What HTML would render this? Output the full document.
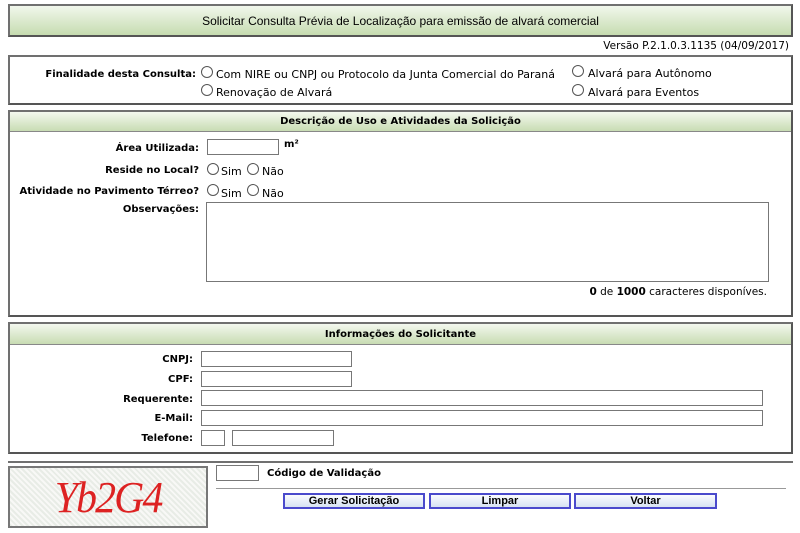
<!DOCTYPE html>
<html><head><meta charset="utf-8"><style>
*{margin:0;padding:0;box-sizing:border-box}
body{width:800px;height:533px;background:#fff;position:relative;overflow:hidden;font-family:"DejaVu Sans","Liberation Sans",sans-serif;font-size:11px;color:#000}
.a{position:absolute;white-space:nowrap}
.box{position:absolute;border:2px solid #707070;border-right-color:#555;border-bottom-color:#555}
.hdr{position:absolute;left:0;right:0;top:0;background:linear-gradient(#f3f8ee,#c8dcb3);border-bottom:1px solid #888;text-align:center;font-weight:bold;font-size:10px}
.b{font-weight:bold;font-size:10px}
.r{text-align:right}
.rad{position:absolute;width:12px;height:12px;border:1px solid #555;border-radius:50%;background:#fff}
.in{position:absolute;border:1px solid #777;background:#fff;height:16px}
.btn{position:absolute;top:493px;height:16px;border:2px solid #4a4acc;background:linear-gradient(#fafcff,#d6e2f2);font-family:"Liberation Sans",sans-serif;font-weight:bold;font-size:11px;text-align:center;line-height:12px}
</style></head><body>
<div class="box" style="left:8px;top:4px;width:785px;height:33px;background:linear-gradient(#f1f7ec,#c6dcb0)"><div class="a" style="left:0;right:0;top:8px;text-align:center;font-family:'Liberation Sans',sans-serif;font-size:12px">Solicitar Consulta Prévia de Localização para emissão de alvará comercial</div></div>
<div class="a" style="right:11px;top:40px;font-size:10.5px">Versão P.2.1.0.3.1135 (04/09/2017)</div>

<div class="box" style="left:8px;top:55px;width:785px;height:50px"></div>
<div class="a b r" style="right:604px;top:69px">Finalidade desta Consulta:</div>
<div class="rad" style="left:201px;top:66px"></div><div class="a" style="left:216px;top:68px">Com NIRE ou CNPJ ou Protocolo da Junta Comercial do Paraná</div>
<div class="rad" style="left:201px;top:84px"></div><div class="a" style="left:216px;top:86px">Renovação de Alvará</div>
<div class="rad" style="left:572px;top:65px"></div><div class="a" style="left:588px;top:67px">Alvará para Autônomo</div>
<div class="rad" style="left:572px;top:84px"></div><div class="a" style="left:588px;top:86px">Alvará para Eventos</div>

<div class="box" style="left:8px;top:110px;width:785px;height:207px"><div class="hdr" style="height:20px;line-height:20px">Descrição de Uso e Atividades da Solicição</div></div>
<div class="a b r" style="right:601px;top:143px">Área Utilizada:</div>
<div class="in" style="left:207px;top:139px;width:72px"></div><div class="a b" style="left:284px;top:139px">m²</div>
<div class="a b r" style="right:601px;top:165px">Reside no Local?</div>
<div class="rad" style="left:207px;top:163px"></div><div class="a" style="left:221px;top:165px">Sim</div>
<div class="rad" style="left:247px;top:163px"></div><div class="a" style="left:262px;top:165px">Não</div>
<div class="a b r" style="right:601px;top:186px">Atividade no Pavimento Térreo?</div>
<div class="rad" style="left:207px;top:184px"></div><div class="a" style="left:221px;top:187px">Sim</div>
<div class="rad" style="left:247px;top:184px"></div><div class="a" style="left:262px;top:187px">Não</div>
<div class="a b r" style="right:601px;top:204px">Observações:</div>
<div class="in" style="left:206px;top:202px;width:563px;height:80px"></div>
<div class="a" style="right:33px;top:286px;font-size:10.5px"><b>0</b> de <b>1000</b> caracteres disponíves.</div>

<div class="box" style="left:8px;top:322px;width:785px;height:132px"><div class="hdr" style="height:21px;line-height:22px">Informações do Solicitante</div></div>
<div class="a b r" style="right:607px;top:354px">CNPJ:</div><div class="in" style="left:201px;top:351px;width:151px"></div>
<div class="a b r" style="right:607px;top:374px">CPF:</div><div class="in" style="left:201px;top:371px;width:151px"></div>
<div class="a b r" style="right:607px;top:394px">Requerente:</div><div class="in" style="left:201px;top:390px;width:562px"></div>
<div class="a b r" style="right:607px;top:413px">E-Mail:</div><div class="in" style="left:201px;top:410px;width:562px"></div>
<div class="a b r" style="right:607px;top:433px">Telefone:</div><div class="in" style="left:201px;top:430px;width:24px"></div><div class="in" style="left:232px;top:430px;width:102px"></div>

<div class="a" style="left:8px;top:461px;width:785px;border-top:2px solid #707070"></div>
<div class="a" style="left:8px;top:466px;width:200px;height:62px;border:2px solid #777;background:repeating-linear-gradient(45deg,#e8ece6 0 2px,#f8f8f6 2px 4px)">
<div class="a" style="left:42px;top:4px;font-family:'Liberation Serif',serif;font-size:44px;font-style:italic;color:#d22;letter-spacing:-2px;transform:scaleX(0.95)">Yb2G4</div></div>
<div class="in" style="left:216px;top:465px;width:43px;height:16px"></div>
<div class="a b" style="left:267px;top:468px">Código de Validação</div>
<div class="a" style="left:216px;top:488px;width:570px;border-top:1px solid #999"></div>
<div class="btn" style="left:283px;width:142px">Gerar Solicitação</div>
<div class="btn" style="left:429px;width:142px">Limpar</div>
<div class="btn" style="left:574px;width:143px">Voltar</div>
</body></html>
